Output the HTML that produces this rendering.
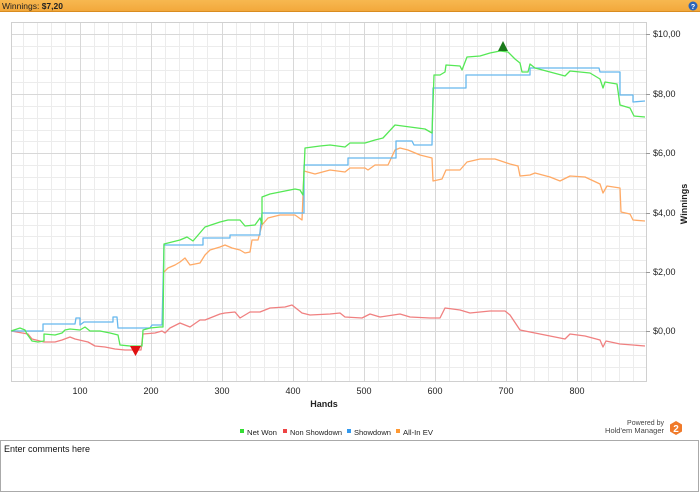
<!DOCTYPE html>
<html><head><style>
html,body{margin:0;padding:0;width:700px;height:492px;overflow:hidden;background:#fff;font-family:"Liberation Sans",sans-serif}
</style></head><body>
<svg width="700" height="492" viewBox="0 0 700 492" xmlns="http://www.w3.org/2000/svg" style="position:absolute;left:0;top:0" font-family="Liberation Sans, sans-serif">
<defs>
<linearGradient id="hb" x1="0" y1="0" x2="0" y2="1"><stop offset="0" stop-color="#f7b850"/><stop offset="1" stop-color="#f2a73a"/></linearGradient>
</defs>
<rect x="0" y="0" width="700" height="12" fill="url(#hb)"/>
<rect x="0" y="11" width="700" height="1" fill="#d98c20"/>
<text x="2" y="9" font-size="8.5" fill="#222">Winnings: <tspan font-weight="bold">$7,20</tspan></text>
<circle cx="693" cy="6" r="4.5" fill="#2a64b8"/><text x="693" y="9" font-size="7" fill="#fff" text-anchor="middle" font-weight="bold">?</text>
<g stroke="#ececec" stroke-width="1" shape-rendering="crispEdges">
<path d="M23.5 22V381M37.5 22V381M51.5 22V381M65.5 22V381M94.5 22V381M108.5 22V381M122.5 22V381M136.5 22V381M165.5 22V381M179.5 22V381M193.5 22V381M207.5 22V381M236.5 22V381M250.5 22V381M264.5 22V381M278.5 22V381M307.5 22V381M321.5 22V381M335.5 22V381M349.5 22V381M378.5 22V381M392.5 22V381M406.5 22V381M420.5 22V381M449.5 22V381M463.5 22V381M477.5 22V381M491.5 22V381M520.5 22V381M534.5 22V381M548.5 22V381M562.5 22V381M591.5 22V381M605.5 22V381M619.5 22V381M633.5 22V381"/>
<path d="M11 46.5H646M11 58.5H646M11 70.5H646M11 82.5H646M11 106.5H646M11 118.5H646M11 130.5H646M11 141.5H646M11 165.5H646M11 177.5H646M11 189.5H646M11 201.5H646M11 225.5H646M11 236.5H646M11 248.5H646M11 260.5H646M11 284.5H646M11 296.5H646M11 308.5H646M11 319.5H646M11 343.5H646M11 355.5H646M11 367.5H646"/>
</g>
<g stroke="#d8d8d8" stroke-width="1" shape-rendering="crispEdges">
<path d="M80.5 22V381M151.5 22V381M222.5 22V381M293.5 22V381M364.5 22V381M435.5 22V381M506.5 22V381M577.5 22V381"/>
<path d="M11 34.5H646M11 94.5H646M11 153.5H646M11 213.5H646M11 272.5H646M11 331.5H646"/>
<rect x="11.5" y="22.5" width="635" height="359" fill="none" stroke="#d0d0d0"/>
</g>
<g fill="none" stroke-width="1.3" stroke-linejoin="round">
<polyline stroke="#f08080" points="11,331 28,334 32,339 44,342 55,342 62,340 70,337 75,339 88,342 95,346 105,347 115,349 125,350 141,350 143,334 155,333 162,331 165,333 170,328 180,323 190,327 200,320 205,320 220,314 225,313 235,312 240,318 250,312 260,312 270,308 285,307 292,305 302,313 310,315 330,314 340,313 345,317 362,318 370,314 380,317 400,314 410,317 430,318 440,318 445,308 460,310 470,313 490,311 505,311 510,315 520,330 530,332 550,336 565,339 570,334 585,336 600,340 603,347 606,341 620,344 645,346"/>
<polyline stroke="#ffaa66" points="164,272 168,268 175,265 180,262 185,258 190,265 200,263 205,255 210,250 220,247 225,245 232,248 240,250 245,253 250,252 252,240 258,240 262,225 268,218 280,215 295,215 302,220 304,171 315,174 330,170 345,172 350,168 365,168 368,170 375,165 388,165 395,150 400,148 408,150 420,155 432,158 433,181 442,179 446,170 460,170 467,162 480,159 495,159 510,164 518,166 520,176 530,175 535,173 550,177 560,181 570,176 585,177 600,184 603,193 607,186 620,188 621,212 630,214 633,220 645,221"/>
<polyline stroke="#66b8ee" points="11,331 43,331 43,324 75,324 76,318 80,318 80,325 84,322 113,322 113,317 117,317 118,328 150,328 152,325 162,325 164,245 203,245 203,238 230,238 230,235 260,235 260,232 262,213 304,213 304,165 348,165 348,158 396,158 396,141 412,141 414,145 432,145 433,88 466,88 466,75 530,75 530,68 599,68 600,72 620,72 620,95 633,95 633,102 645,101"/>
<polyline stroke="#55e855" points="11,331 20,328 25,330 27,334 32,341 38,342 44,341 44,334 55,335 62,333 65,330 70,329 80,330 85,327 90,331 100,331 110,333 118,335 120,345 130,346 142,346 143,330 150,328 160,327 163,327 164,244 180,240 187,237 193,241 205,227 220,222 228,220 240,220 245,226 255,225 260,218 262,224 262,197 270,194 285,191 295,189 300,190 303,195 305,148 320,146 330,145 345,147 350,143 365,143 375,140 383,138 395,125 410,127 425,129 432,133 434,75 440,75 445,72 446,65 460,66 462,70 467,57 480,56 490,53 500,51 508,52 515,59 520,63 522,72 528,72 530,64 535,68 550,72 565,76 570,71 590,73 600,79 603,88 605,82 617,84 620,105 630,108 634,116 645,117"/>
</g>
<polygon points="130,346 141,346 135.5,356" fill="#e01010"/>
<polygon points="498,51 508,51 503,41" fill="#1a7a1a"/>
<g font-size="9" fill="#222" text-anchor="middle">
<text x="80" y="394">100</text><text x="151" y="394">200</text><text x="222" y="394">300</text><text x="293" y="394">400</text><text x="364" y="394">500</text><text x="435" y="394">600</text><text x="506" y="394">700</text><text x="577" y="394">800</text>
</g>
<text x="324" y="407" font-size="9" font-weight="bold" text-anchor="middle" fill="#222">Hands</text>
<g font-size="9" fill="#222">
<text x="653" y="37">$10,00</text><text x="653" y="97">$8,00</text><text x="653" y="156">$6,00</text><text x="653" y="216">$4,00</text><text x="653" y="275">$2,00</text><text x="653" y="334">$0,00</text>
</g>
<g stroke="#999" shape-rendering="crispEdges"><path d="M646 34.5h4M646 94.5h4M646 153.5h4M646 213.5h4M646 272.5h4M646 331.5h4"/></g>
<text transform="translate(687,204) rotate(-90)" font-size="9" font-weight="bold" text-anchor="middle" fill="#222">Winnings</text>
<g font-size="7.5" fill="#222">
<rect x="240" y="429" width="4" height="4" fill="#33dd33"/><text x="247" y="435" textLength="30" lengthAdjust="spacingAndGlyphs">Net Won</text>
<rect x="283" y="429" width="4" height="4" fill="#ee4444"/><text x="290" y="435" textLength="52" lengthAdjust="spacingAndGlyphs">Non Showdown</text>
<rect x="347" y="429" width="4" height="4" fill="#3399ee"/><text x="354" y="435" textLength="37" lengthAdjust="spacingAndGlyphs">Showdown</text>
<rect x="396" y="429" width="4" height="4" fill="#ff9933"/><text x="403" y="435" textLength="30" lengthAdjust="spacingAndGlyphs">All-In EV</text>
</g>
<text x="664" y="425" font-size="7" fill="#444" text-anchor="end">Powered by</text>
<text x="664" y="433" font-size="7.5" fill="#444" text-anchor="end">Hold'em Manager</text>
<polygon points="676,421 682,424.5 682,431.5 676,435 670,431.5 670,424.5" fill="#f07a2a"/>
<text x="676" y="432" font-size="10" font-weight="bold" fill="#fff" text-anchor="middle">2</text>
<rect x="0.5" y="440.5" width="698" height="51" fill="#fff" stroke="#aaa"/>
<text x="4" y="452" font-size="9" fill="#111">Enter comments here</text>
</svg>
</body></html>
